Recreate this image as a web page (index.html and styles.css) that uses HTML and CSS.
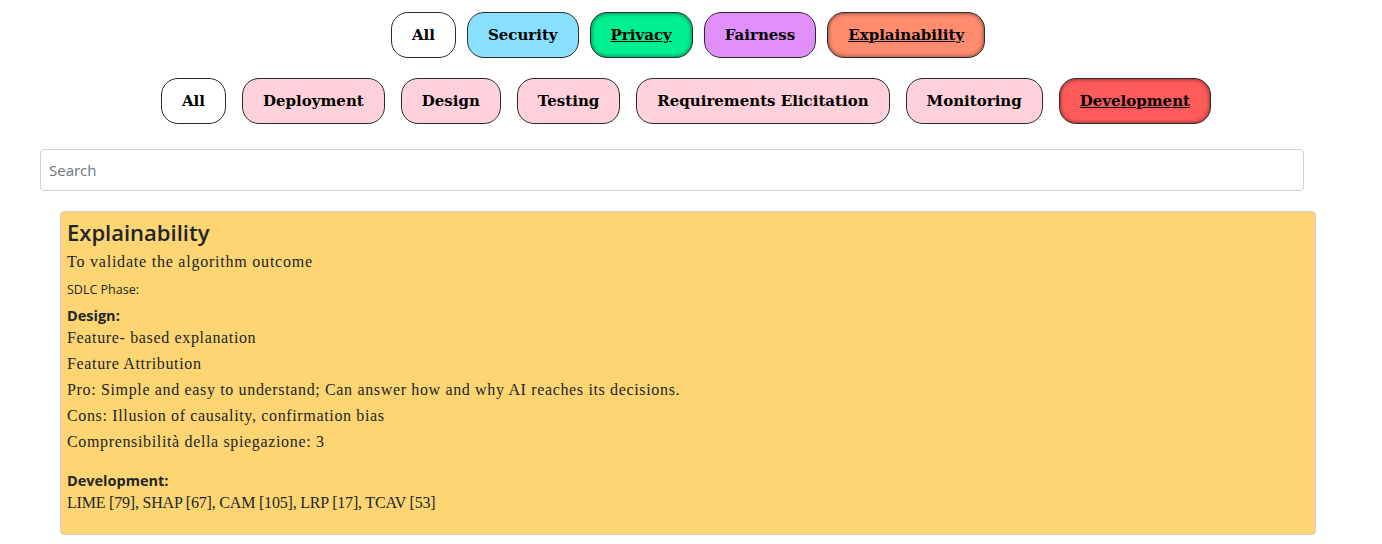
FILE: index.html
```html
<!DOCTYPE html>
<html lang="en">
<head>
<meta charset="utf-8">
<title>Explainability</title>
<link rel="stylesheet" href="styles.css">
</head>
<body>
<div class="page">
  <div class="filters filters-cat">
    <button class="pill pill-all">All</button>
    <button class="pill pill-security">Security</button>
    <button class="pill pill-privacy active">Privacy</button>
    <button class="pill pill-fairness">Fairness</button>
    <button class="pill pill-explain active">Explainability</button>
  </div>
  <div class="filters filters-phase">
    <button class="pill pill-all">All</button>
    <button class="pill pill-phase">Deployment</button>
    <button class="pill pill-phase">Design</button>
    <button class="pill pill-phase">Testing</button>
    <button class="pill pill-phase">Requirements Elicitation</button>
    <button class="pill pill-phase">Monitoring</button>
    <button class="pill pill-dev active">Development</button>
  </div>
  <div class="search-wrap">
    <input class="search" type="text" placeholder="Search">
  </div>
  <div class="card">
    <h4 class="card-title">Explainability</h4>
    <p class="card-desc">To validate the algorithm outcome</p>
    <p class="card-small">SDLC Phase:</p>
    <div class="phase">
      <div class="phase-label">Design:</div>
      <p class="line">Feature- based explanation</p>
      <p class="line">Feature Attribution</p>
      <p class="line">Pro: Simple and easy to understand; Can answer how and why AI reaches its decisions.</p>
      <p class="line">Cons: Illusion of causality, confirmation bias</p>
      <p class="line">Comprensibilità della spiegazione: 3</p>
    </div>
    <div class="phase phase-last">
      <div class="phase-label">Development:</div>
      <p class="line line-refs">LIME [79], SHAP [67], CAM [105], LRP [17], TCAV [53]</p>
    </div>
  </div>
</div>
</body>
</html>
```
FILE: styles.css
```css
* { box-sizing: border-box; }
html, body { margin: 0; padding: 0; background: #fff; }
body { padding: 8px; font-family: "Liberation Serif", serif; color: #212529; }

.page { display: flex; flex-direction: column; }

.filters { display: flex; justify-content: center; }
.filters-cat { gap: 11px; margin-top: 4px; padding-right: 6px; }
.filters-phase { gap: 16px; margin-top: 20px; padding-right: 10px; }

.pill {
  height: 46px;
  padding: 0 20px;
  border: 1px solid #2b2b2b;
  border-radius: 17px;
  background: #fff;
  color: #000;
  font-family: "DejaVu Serif", serif;
  font-weight: bold;
  font-size: 15px;
  cursor: pointer;
}
.pill-security { background: #88e0fc; }
.pill-privacy { background: #00f08f; }
.pill-fairness { background: #e08ef8; }
.pill-explain { background: #ff8c6e; }
.pill-phase { background: #ffd1da; }
.pill-dev { background: #ff5b5b; }
.pill.active { text-decoration: underline; box-shadow: inset 0 0 4px rgba(0,0,0,0.6); }

.search-wrap { margin-top: 25px; padding: 0 70px 0 32px; }
.search {
  width: 100%;
  height: 42px;
  border: 1px solid #ced4da;
  border-radius: 4px;
  padding: 0 8px;
  font-family: "Open Sans", sans-serif;
  font-size: 15px;
  color: #495057;
  outline: none;
}
.search::placeholder { color: #6c757d; }

.card {
  margin: 20px 58px 0 52px;
  background: #fdd572;
  border: 1px solid #cfcfcf;
  border-radius: 4px;
  padding: 6px 6px 16px 6px;
}
.card-title {
  margin: 0 0 4px 0;
  font-family: "Open Sans", sans-serif;
  font-weight: 600;
  font-size: 22px;
  line-height: 29px;
  color: #212529;
}
.card-desc { margin: 0 0 7px 0; font-size: 16px; line-height: 22px; letter-spacing: 0.78px; }
.card-small {
  margin: 0 0 5px 0;
  font-family: "Open Sans", sans-serif;
  font-size: 12.5px;
  line-height: 20px;
}
.phase { margin-bottom: 17px; }
.phase-last { margin-bottom: 0; }
.phase-label {
  font-family: "Open Sans", sans-serif;
  font-weight: bold;
  font-size: 14.5px;
  line-height: 22px;
}
.line { margin: 0 0 4px 0; font-size: 16px; line-height: 22px; letter-spacing: 0.65px; }
.line-refs { letter-spacing: -0.2px; }
```
